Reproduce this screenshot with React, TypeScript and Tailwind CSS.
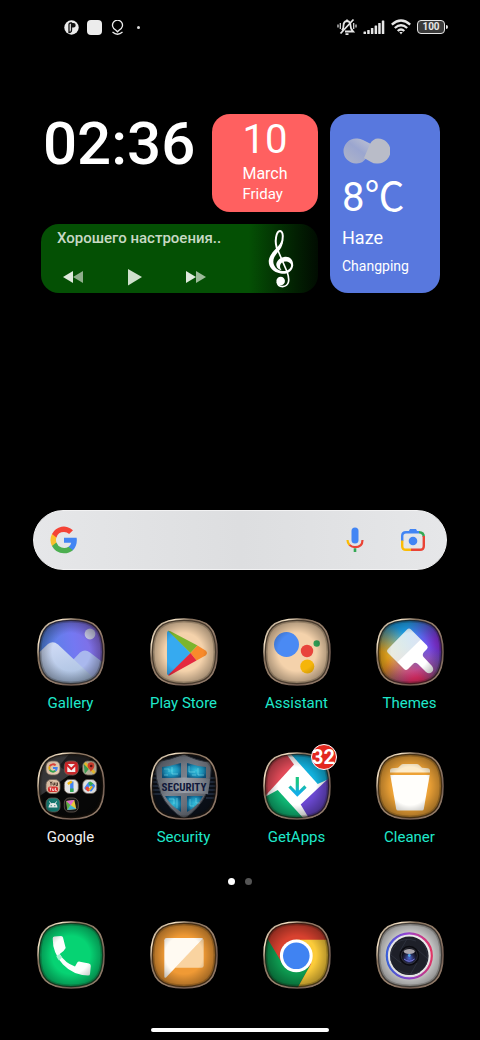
import React from "react";

const SQUIRCLE =
  "M34 1C58 1 67 10 67 34C67 58 58 67 34 67C10 67 1 58 1 34C1 10 10 1 34 1Z";

function Tile({
  id,
  shade = 0.6,
  children,
}: {
  id: string;
  shade?: number;
  children: React.ReactNode;
}) {
  return (
    <svg viewBox="0 0 68 68" className="size-[68px]" aria-hidden="true">
      <defs>
        <clipPath id={`${id}-clip`}>
          <path d={SQUIRCLE} />
        </clipPath>
        <radialGradient id={`${id}-shade`} cx="0.5" cy="0.5" r="0.62">
          <stop offset="0.45" stopColor="#000" stopOpacity="0" />
          <stop offset="0.78" stopColor="#000" stopOpacity={shade * 0.55} />
          <stop offset="1" stopColor="#000" stopOpacity={shade} />
        </radialGradient>
        <linearGradient id={`${id}-rim`} x1="0" y1="0" x2="1" y2="1">
          <stop offset="0" stopColor="#6b5a48" />
          <stop offset="0.18" stopColor="#f6e4c8" />
          <stop offset="0.3" stopColor="#85705c" />
          <stop offset="0.55" stopColor="#9c8470" />
          <stop offset="0.75" stopColor="#6f5a50" />
          <stop offset="1" stopColor="#b09880" />
        </linearGradient>
      </defs>
      <g clipPath={`url(#${id}-clip)`}>
        {children}
        <rect width="68" height="68" fill={`url(#${id}-shade)`} />
        <path d={SQUIRCLE} fill="none" stroke="#1a120c" strokeOpacity="0.2" strokeWidth="7" />
        <path d={SQUIRCLE} fill="none" stroke="#1a120c" strokeOpacity="0.6" strokeWidth="4" />
      </g>
      <path d={SQUIRCLE} fill="none" stroke={`url(#${id}-rim)`} strokeWidth="1.6" />
    </svg>
  );
}

function GalleryIcon() {
  return (
    <Tile id="gallery">
      <defs>
        <linearGradient id="gallery-sky" x1="0" y1="0.5" x2="1" y2="0.3">
          <stop offset="0" stopColor="#4b86e0" />
          <stop offset="0.55" stopColor="#7478f2" />
          <stop offset="1" stopColor="#8a68dc" />
        </linearGradient>
        <linearGradient id="gallery-hill" x1="0" y1="0" x2="0.3" y2="1">
          <stop offset="0" stopColor="#d3def8" />
          <stop offset="1" stopColor="#a9bfdf" />
        </linearGradient>
      </defs>
      <rect width="68" height="68" fill="url(#gallery-sky)" />
      <circle cx="53" cy="16" r="5.4" fill="#c9cbe8" />
      <path d="M34 44L43 34.500Q48 30.500 53 34.500L68 46V68H34Z" fill="#a9b8ee" />
      <path d="M0 36.500L11 26Q16 22.500 21 26.500L62 65V68H0Z" fill="url(#gallery-hill)" />
    </Tile>
  );
}

function PlayStoreIcon() {
  return (
    <Tile id="play">
      <rect width="68" height="68" fill="#f4d2ab" />
      <path d="M17 15Q17 12.500 19 13L40.500 35L19.500 57Q17 57.500 17 55.500Z" fill="#36aaf0" />
      <path d="M18 12.800Q19 12.500 20.500 13.300L47.500 27.500L40.500 35Z" fill="#7cb52e" />
      <path d="M47.500 27.500L55.500 32.500Q58.500 35 55.500 37.500L46.500 42.500L40.500 35Z" fill="#f98a2b" />
      <path d="M40.500 35L46.500 42.500L20 57.200Q18.800 57.700 18 57.200Z" fill="#e5283f" />
    </Tile>
  );
}

function AssistantIcon() {
  return (
    <Tile id="assistant">
      <rect width="68" height="68" fill="#f4d2ab" />
      <circle cx="23.500" cy="26.500" r="12.500" fill="#4a8af4" />
      <circle cx="44" cy="33" r="6.200" fill="#e8443c" />
      <circle cx="53.700" cy="25.500" r="3.200" fill="#2f9e55" />
      <circle cx="44.300" cy="48.500" r="7" fill="#f5b50a" />
    </Tile>
  );
}

function ThemesIcon() {
  return (
    <Tile id="themes">
      <defs>
        <radialGradient id="themes-purple" cx="1" cy="0.35" r="0.6">
          <stop offset="0.2" stopColor="#8b35e8" />
          <stop offset="1" stopColor="#8b35e8" stopOpacity="0" />
        </radialGradient>
        <radialGradient id="themes-pink" cx="0.6" cy="1" r="0.6">
          <stop offset="0.2" stopColor="#f0306c" />
          <stop offset="1" stopColor="#f0306c" stopOpacity="0" />
        </radialGradient>
        <radialGradient id="themes-amber" cx="0" cy="0.65" r="0.6">
          <stop offset="0.3" stopColor="#f2ac1c" />
          <stop offset="1" stopColor="#f2ac1c" stopOpacity="0" />
        </radialGradient>
        <linearGradient id="themes-head" x1="0" y1="0" x2="0.8" y2="0.8">
          <stop offset="0.6" stopColor="#eef4f4" stopOpacity="0.88" />
          <stop offset="0.62" stopColor="#fff" />
        </linearGradient>
      </defs>
      <rect width="68" height="68" fill="#1d9fe8" />
      <rect width="68" height="68" fill="url(#themes-purple)" />
      <rect width="68" height="68" fill="url(#themes-amber)" />
      <rect width="68" height="68" fill="url(#themes-pink)" />
      <path
        d="M12 31L31 11.500Q33 9.700 35 11.500L51 27.500Q52.500 29 51 31L48 34Q45.500 37 48 39.500L56 48Q58.500 51.500 56 54Q53 56.500 50 54L42.500 46.500Q39.500 43.500 37 46L32 51Q30 53 28 51L12 35Q10 33 12 31Z"
        fill="url(#themes-head)"
      />
    </Tile>
  );
}

function MiniTile({ x, y, fill, children }: { x: number; y: number; fill: string; children: React.ReactNode }) {
  return (
    <g transform={`translate(${x} ${y})`}>
      <rect x="-7" y="-7" width="14" height="14" rx="5" fill={fill} stroke="#6d6157" strokeWidth="0.8" />
      {children}
    </g>
  );
}

function GoogleFolderIcon() {
  return (
    <Tile id="google" shade={0.2}>
      <rect width="68" height="68" fill="#070707" />
      <path d="M0 0H34V22L0 46Z" fill="#3a3a3c" />
      <path d="M34 0L60 0L36 24L22 14Z" fill="#1d1d1f" />
      <MiniTile x={16} y={16} fill="#e9cfb4">
        <g fill="none" strokeWidth="2">
          <path d="M2.600 -2.600A3.700 3.700 0 0 0 -3.200 -1.800" stroke="#e8443c" />
          <path d="M-3.200 -1.800A3.700 3.700 0 0 0 -3.200 1.800" stroke="#f5b50a" />
          <path d="M-3.200 1.800A3.700 3.700 0 0 0 2.400 2.800" stroke="#34a853" />
          <path d="M2.400 2.800A3.700 3.700 0 0 0 3.700 0H0" stroke="#4285f4" />
        </g>
      </MiniTile>
      <MiniTile x={34.3} y={16} fill="#c32a2c">
        <rect x="-5" y="-4" width="10" height="8" fill="#f2eeee" />
        <path d="M-5 4V-4L0 1L5 -4V4" fill="none" stroke="#d42126" strokeWidth="2" />
      </MiniTile>
      <MiniTile x={52.7} y={16} fill="#b9b49c">
        <path d="M-6 -5L0 0L-5 6Z" fill="#3e9e54" />
        <path d="M-5 -5L5 5" stroke="#f0c02c" strokeWidth="2.5" />
        <path d="M1 4C1 1 -3 0 -2 -3A3.300 3.300 0 0 1 4.600 -2C4.600 1 1.500 2 1 4Z" fill="#d8402f" />
        <circle cx="1.500" cy="-2" r="1.300" fill="#571713" />
      </MiniTile>
      <MiniTile x={16} y={34.5} fill="#dcc2a8">
        <path d="M-3 -5L-2 -3L-1 -5M-2 -3V-1M0 -4V-1.500H1.500V-4M3 -4V-1H4.500V-4" fill="none" stroke="#4b3329" strokeWidth="0.900" />
        <rect x="-5" y="0" width="10" height="5.500" rx="2" fill="#d7302e" />
        <path d="M-3.500 1.500H-1.500M-2.500 1.500V4.200M-0.500 2V4H1V2M2.500 1.300V4.200H4" fill="none" stroke="#fff" strokeWidth="0.700" />
      </MiniTile>
      <MiniTile x={34.3} y={34.5} fill="#e4e4e4">
        <path d="M0.500 -5V5" stroke="#4285f4" strokeWidth="3.400" />
        <path d="M0.500 -5L-3.500 -2.500" stroke="#f5b50a" strokeWidth="2.600" />
        <path d="M0.500 2V5.500" stroke="#34a853" strokeWidth="3.400" />
      </MiniTile>
      <MiniTile x={52.7} y={34.5} fill="#dfe2e4">
        <g strokeWidth="3.600" strokeLinecap="round">
          <path d="M-3.500 1.500L-0.500 -2.500" stroke="#4285f4" />
          <path d="M0.500 -3L2.500 -1.500" stroke="#34a853" />
          <path d="M3.500 -0.500L1 3" stroke="#4285f4" />
          <path d="M-1.500 3L-2.500 2" stroke="#ea4335" />
          <path d="M0 3L2 0.500" stroke="#f5b50a" strokeWidth="2" />
        </g>
      </MiniTile>
      <MiniTile x={16} y={53} fill="#157a72">
        <path d="M-4.500 2.500A4.500 4.500 0 0 1 4.500 2.500Z" fill="#f1f6f5" />
        <path d="M-3.500 -3.500L-2 -1M3.500 -3.500L2 -1" stroke="#f1f6f5" strokeWidth="1" />
        <circle cx="-1.800" cy="0.700" r="0.600" fill="#157a72" />
        <circle cx="1.800" cy="0.700" r="0.600" fill="#157a72" />
      </MiniTile>
      <MiniTile x={34.3} y={53} fill="#191919">
        <path d="M-5 -4L3 -5L5 4L-4 5Z" fill="#e8c83c" />
        <path d="M-5 -4L3 -5L-1 1Z" fill="#e26ad2" />
        <path d="M-4 5L-1 0L5 4Z" fill="#47b7d8" />
        <path d="M-5 -4L-1 0L-4 5Z" fill="#58b04c" />
      </MiniTile>
    </Tile>
  );
}

function SecurityIcon() {
  return (
    <Tile id="security" shade={0.35}>
      <defs>
        <linearGradient id="security-steel" x1="0" y1="0" x2="1" y2="1">
          <stop offset="0" stopColor="#5a606a" />
          <stop offset="0.45" stopColor="#7b818b" />
          <stop offset="1" stopColor="#4a4f58" />
        </linearGradient>
        <linearGradient id="security-band" x1="0" y1="0" x2="1" y2="0">
          <stop offset="0" stopColor="#666c76" />
          <stop offset="0.5" stopColor="#9a9fa8" />
          <stop offset="1" stopColor="#6e747e" />
        </linearGradient>
        <radialGradient id="security-glass" cx="0.5" cy="0.5" r="0.6">
          <stop offset="0" stopColor="#36c4e0" />
          <stop offset="0.6" stopColor="#1b8fb8" />
          <stop offset="1" stopColor="#0c4f78" />
        </radialGradient>
      </defs>
      <rect width="68" height="68" fill="#0b1019" />
      <path d="M0 22H8M0 26H8M0 30H9M0 34H9M0 38H10M0 42H11M60 26H68M60 30H68M59 34H68M58 38H68M57 42H68M56 46H68" stroke="#28344a" strokeWidth="1.600" />
      <path
        d="M34 2Q46 9 61 10Q62 27 56 42Q50 56 34 67Q18 57 11 42Q5 27 5 10Q21 8 34 2Z"
        fill="url(#security-steel)"
        stroke="#353a42"
      />
      <path d="M12 15Q21 14 31 11V26H12Z" fill="url(#security-glass)" />
      <path d="M37 11Q46 14 56 15V26H37Z" fill="url(#security-glass)" />
      <path d="M15 44H31V60Q20 53 15 44Z" fill="url(#security-glass)" />
      <path d="M37 44H53Q48 54 37 60Z" fill="url(#security-glass)" />
      <path
        d="M14 17H19V20M22 15V22H28M14 23H18M39 14V20H45M48 16V23H54M42 23H46M19 47H24V52M27 46V56M40 47V54H44M46 46V51H50"
        fill="none"
        stroke="#82e4ef"
        strokeOpacity="0.600"
        strokeWidth="0.900"
      />
      <path d="M8 27Q34 24 60 27L58 42Q34 40 12 42Z" fill="url(#security-band)" />
      <text
        x="34"
        y="39"
        textAnchor="middle"
        className="fill-[#10183a] font-['Liberation_Sans_Narrow','Roboto_Condensed',Roboto,sans-serif] text-[11px] font-bold"
      >
        SECURITY
      </text>
    </Tile>
  );
}

function GetAppsIcon() {
  return (
    <Tile id="getapps">
      <defs>
        <linearGradient id="getapps-arrow" gradientUnits="userSpaceOnUse" x1="34" y1="25" x2="34" y2="44">
          <stop offset="0.3" stopColor="#19c584" />
          <stop offset="0.8" stopColor="#12aee6" />
        </linearGradient>
      </defs>
      <rect width="68" height="68" fill="#fff" />
      <path d="M0 0H22L31 12.500L4 42L0 46Z" fill="#e14a58" />
      <path d="M26 0H68V26L54.700 32Z" fill="#12b0dc" />
      <path d="M0 46L14.700 38L42 68H0Z" fill="#0fb573" />
      <path d="M68 24V68H47L37.700 52.500Z" fill="#6a48d0" />
      <path d="M34.300 25V43M26.500 34.500L34.300 42.500L42.500 34.500" fill="none" stroke="url(#getapps-arrow)" strokeWidth="3.200" />
    </Tile>
  );
}

function CleanerIcon() {
  return (
    <Tile id="cleaner">
      <rect width="68" height="68" fill="#eda236" />
      <path d="M14 20.500V18.500Q14 16.500 16 16.300L22 15.800L25.500 12.500Q26 12 27 12H41Q42 12 42.500 12.500L46 15.800L52 16.300Q54 16.500 54 18.500V20.500Z" fill="#fdeccb" />
      <path d="M14.300 23H53.700L47.800 57Q47.500 58.500 46 58.500H22Q20.500 58.500 20.200 57Z" fill="#fffefb" />
    </Tile>
  );
}

function PhoneIcon() {
  return (
    <Tile id="phone">
      <rect width="68" height="68" fill="#06d373" />
      <path
        d="M17.500 15.500L24 15Q25.700 15 26 16.500L28.700 27Q27 30.500 22.700 33Q28 42 38 45.500L40 42Q41 40.300 43 40.700L52 42.500Q54 43 53.800 45L53 53Q53 54.500 51 54.500Q36 54 26 43.500Q15.500 32 15.700 17.500Q15.700 15.700 17.500 15.500Z"
        fill="#fbfffd"
      />
      <path d="M19.300 35L22.700 33Q23.500 34.500 25 36.500L22 39.500Q20 37 19.300 35Z" fill="#a5f3d2" />
    </Tile>
  );
}

function MessagesIcon() {
  return (
    <Tile id="messages">
      <rect width="68" height="68" fill="#f09a35" />
      <path d="M53.700 19V44.500Q53.700 46.800 51.500 46.800H25L52.800 17.500Z" fill="#f9d3a0" />
      <path d="M16.500 17H51.500Q52.500 17 53 17.500L16 56.500Q14.300 57.500 14.300 55.500V19.200Q14.300 17 16.500 17Z" fill="#fffaf2" />
    </Tile>
  );
}

function ChromeIcon() {
  return (
    <Tile id="chrome">
      <rect width="68" height="68" fill="#d8412f" />
      <path d="M0 10L5 18.500L19 42L34 50L47 45L34 68H0Z" fill="#0d9a50" />
      <path d="M33.300 18.800H68V68H34L48 43Z" fill="#fbcb3a" />
      <circle cx="33.300" cy="34.800" r="16.400" fill="#fff" />
      <circle cx="33.300" cy="34.800" r="13.300" fill="#4083f2" />
    </Tile>
  );
}

function CameraIcon() {
  return (
    <Tile id="camera">
      <defs>
        <linearGradient id="camera-ring" x1="0" y1="0.6" x2="1" y2="0.5">
          <stop offset="0" stopColor="#3f6bf0" />
          <stop offset="0.5" stopColor="#a048e0" />
          <stop offset="1" stopColor="#f0386c" />
        </linearGradient>
        <radialGradient id="camera-lens" cx="0.5" cy="0.65" r="0.5">
          <stop offset="0" stopColor="#4e6ad8" />
          <stop offset="0.6" stopColor="#23264a" />
          <stop offset="1" stopColor="#0c0c12" />
        </radialGradient>
      </defs>
      <rect width="68" height="68" fill="#d9d9d9" />
      <circle cx="33.300" cy="34.800" r="22.500" fill="#ededed" stroke="url(#camera-ring)" strokeWidth="2.200" />
      <circle cx="33.300" cy="34.800" r="19.300" fill="#1e2029" />
      <path
        d="M20 22Q30 16 40 20M47 22Q54 32 50 44M44 51Q34 56 22 49M15 40Q13 30 20 24M24 30L31 18M42 29L52 38M41 42L34 54M25 42L15 34"
        fill="none"
        stroke="#343845"
        strokeWidth="0.700"
      />
      <circle cx="33.300" cy="34.800" r="10" fill="#0b0b10" />
      <circle cx="33.300" cy="34.800" r="8" fill="url(#camera-lens)" stroke="#3d3f4a" strokeWidth="0.700" />
      <ellipse cx="33.300" cy="30.500" rx="5.500" ry="2.600" fill="#c4c0c4" fillOpacity="0.850" />
      <path d="M28 38Q33.300 42.500 38.600 38" fill="none" stroke="#7d7ae6" />
      <circle cx="33.300" cy="34.500" r="1.400" fill="#4fa6e8" />
    </Tile>
  );
}

const apps = [
  { name: "Gallery", icon: <GalleryIcon /> },
  { name: "Play Store", icon: <PlayStoreIcon /> },
  { name: "Assistant", icon: <AssistantIcon /> },
  { name: "Themes", icon: <ThemesIcon /> },
  { name: "Google", icon: <GoogleFolderIcon />, folder: true },
  { name: "Security", icon: <SecurityIcon /> },
  { name: "GetApps", icon: <GetAppsIcon />, badge: 32 },
  { name: "Cleaner", icon: <CleanerIcon /> },
];

const dock = [
  { name: "Phone", icon: <PhoneIcon /> },
  { name: "Messages", icon: <MessagesIcon /> },
  { name: "Chrome", icon: <ChromeIcon /> },
  { name: "Camera", icon: <CameraIcon /> },
];

function StatusBar() {
  return (
    <header className="flex items-center justify-between pt-[15px] pr-8 pl-16">
      <div className="flex h-6 items-center gap-2">
        <svg viewBox="0 0 15 15" className="size-[15px]">
          <circle cx="7.500" cy="7.500" r="7.200" fill="#ececec" />
          <path d="M5 12.500V4.500Q5 3 6.500 3H7.500V10Q7.500 12.500 5 12.500Z" fill="#ececec" stroke="#111" strokeWidth="1.300" />
          <path d="M7.500 3H9.500A2.200 2.200 0 0 1 9.500 7.400H7.500" fill="#111" />
        </svg>
        <span className="size-[15px] rounded-sm bg-[#ececec]" />
        <svg viewBox="0 0 15 15" className="size-[15px]" fill="none" stroke="#ececec" strokeWidth="1.300">
          <path d="M5.500 9.800A5 5 0 1 1 9.500 9.800L7.500 11.800Z" />
          <path d="M2.500 12Q7.500 16.500 12.500 12" />
        </svg>
        <span className="ml-1 size-[3px] rounded-full bg-[#dcdcdc]" />
      </div>
      <div className="flex h-6 items-center gap-1.5">
        <svg viewBox="0 0 20 18" className="h-[18px] w-5" fill="none" stroke="#e6e6e6" strokeWidth="1.800">
          <path d="M5 12.500Q6.500 11 6.500 7.500Q6.500 3.500 10 3Q13.500 3.500 13.500 7.500Q13.500 11 16 13.500H8" />
          <path d="M8.500 16.200H11.500M10 3V1.500M16.500 1.500L3.500 15.500" />
          <path d="M3.300 5V11M1 6.500V9.500M16.700 5V11M19 6.500V9.500" strokeWidth="1.200" />
        </svg>
        <svg viewBox="0 0 22 15" className="h-[15px] w-[22px]" fill="#e6e6e6">
          <rect x="0.500" y="11.500" width="2.500" height="2.500" rx="0.500" />
          <rect x="4.200" y="10" width="2.500" height="4" rx="0.500" />
          <rect x="7.900" y="8" width="2.500" height="6" rx="0.500" />
          <rect x="11.600" y="5.500" width="2.500" height="8.500" rx="0.500" />
          <rect x="15.200" y="3" width="2.500" height="11" rx="0.500" />
          <rect x="18.800" y="0.500" width="2.500" height="13.500" rx="0.500" />
        </svg>
        <svg viewBox="0 0 20 16" className="h-4 w-5" fill="none" stroke="#e6e6e6" strokeWidth="2.300">
          <path d="M0.800 5.600Q10 -2.500 19.200 5.600" />
          <path d="M3.800 9Q10 3.500 16.200 9" />
          <path d="M6.700 12Q10 9 13.300 12" />
          <path d="M8.300 13L10 15.500L11.700 13Z" fill="#e6e6e6" stroke="none" />
        </svg>
        <div className="flex items-center gap-px">
          <span className="flex h-[14px] w-7 items-center justify-center rounded-[4px] border border-[#e6e6e6] bg-[#3a3a3a] text-[10px] leading-none font-bold text-[#e6e6e6]">
            100
          </span>
          <span className="h-1 w-0.5 rounded-r bg-[#e6e6e6]" />
        </div>
      </div>
    </header>
  );
}

function TrebleClef() {
  return (
    <svg viewBox="0 0 78 176" className="h-[58px] w-[26px]" fill="#fff">
      <path d="M30 64C16 34 26 3 36 3C46 4 48 28 38 46" fill="none" stroke="#fff" strokeWidth="6" />
      <path d="M45 32C45 56 28 66 19 82C11 98 18 116 36 123C52 128 68 122 70 106L76 106C75 126 56 136 38 132C14 128 0 112 2 92C6 68 26 58 36 42Z" />
      <path d="M76 108C77 88 62 78 48 82C32 85 23 98 25 108C27 117 34 121 41 122C33 112 35 99 48 96C60 94 70 100 70 108Z" />
      <path d="M28 58L58 128C66 152 64 170 44 172C34 172 28 166 28 158" fill="none" stroke="#fff" strokeWidth="5" />
      <circle cx="38" cy="155" r="13" />
    </svg>
  );
}

function MusicWidget() {
  return (
    <section className="flex h-[69px] items-center justify-between rounded-[18px] bg-linear-to-r from-[#045004] from-75% to-[#010c01] pr-6 pl-4">
      <div className="flex h-full flex-col">
        <p className="mt-1 text-[15px] leading-5 font-medium text-[#c8d9c4]">Хорошего настроения..</p>
        <div className="mt-4 flex items-center gap-9 pl-1">
          <button aria-label="Previous" className="h-[26px] w-[26px]">
            <svg viewBox="0 0 26 26" className="size-full">
              <path d="M2 13L12 7V19Z" fill="#dfe9dd" />
              <path d="M12 13L22 7V19Z" fill="#8fae8c" />
            </svg>
          </button>
          <button aria-label="Play" className="h-[26px] w-[26px]">
            <svg viewBox="0 0 26 26" className="size-full">
              <path d="M5 5L19 13L5 21.500Z" fill="#cfe0cc" />
            </svg>
          </button>
          <button aria-label="Next" className="h-[26px] w-[26px]">
            <svg viewBox="0 0 26 26" className="size-full">
              <path d="M1 7L11 13L1 19Z" fill="#dfe9dd" />
              <path d="M11 7L21 13L11 19Z" fill="#9dba9a" />
            </svg>
          </button>
        </div>
      </div>
      <TrebleClef />
    </section>
  );
}

function WeatherWidget() {
  return (
    <section className="flex w-[110px] flex-col rounded-[18px] bg-[#5878de] pt-6 pl-3">
      <svg viewBox="0 0 48 26" className="h-[26px] w-12">
        <defs>
          <linearGradient id="haze-left" x1="0" y1="1" x2="1" y2="0">
            <stop offset="0" stopColor="#b0b5c8" />
            <stop offset="0.500" stopColor="#9ba6cf" />
            <stop offset="1" stopColor="#c8cad3" />
          </linearGradient>
        </defs>
        <path d="M14 0.500Q18 0 21 2L35 9L26 18Q21 26 14 25.500A12.500 12.500 0 0 1 14 0.500Z" fill="url(#haze-left)" />
        <path d="M36 0.500A12.500 12.500 0 0 1 36 25.500Q32 26 29 24L22 20L28 6Q31 0.500 36 0.500Z" fill="#b9bcc8" />
      </svg>
      <p className="mt-2.5 text-[40px] leading-12">8℃</p>
      <p className="mt-1 text-lg leading-6">Haze</p>
      <p className="mt-1.5 text-sm leading-5">Changping</p>
    </section>
  );
}

function SearchBar() {
  return (
    <form
      role="search"
      className="mx-[33px] flex h-[60px] items-center rounded-full border border-[#f2f2f3] bg-linear-to-r from-[#e6e7e9] via-[#dddee0] to-[#e6e7e9] pr-5 pl-4"
    >
      <svg viewBox="0 0 24 24" className="size-[28px]">
        <path fill="#4285f4" d="M23 12.250c0-.8-.07-1.500-.2-2.250H12v4.300h6.200a5.300 5.300 0 0 1-2.300 3.500v2.900h3.700c2.200-2 3.400-5 3.400-8.450z" />
        <path fill="#4caf50" d="M12 23.400c3.100 0 5.700-1 7.600-2.700l-3.700-2.900a7 7 0 0 1-10.400-3.600H1.700v3A11.400 11.400 0 0 0 12 23.400z" />
        <path fill="#fbc02d" d="M5.500 14.200a6.800 6.800 0 0 1 0-4.400v-3H1.700a11.400 11.400 0 0 0 0 10.300z" />
        <path fill="#f44336" d="M12 5.200c1.700 0 3.200.6 4.400 1.700l3.300-3.300A11.400 11.400 0 0 0 1.700 6.900l3.800 3A6.800 6.800 0 0 1 12 5.200z" />
      </svg>
      <input type="search" aria-label="Search" className="min-w-0 flex-1 bg-transparent px-3 text-base text-gray-800 outline-none" />
      <button type="button" aria-label="Voice search" className="mr-8">
        <svg viewBox="0 0 26 26" className="size-[26px]" fill="none">
          <rect x="9.500" y="0.500" width="7" height="16" rx="3.500" fill="#4285f4" />
          <path d="M5.500 13Q5.500 15.800 7.500 18" stroke="#fbbc04" strokeWidth="2.200" />
          <path d="M7.500 18Q10 20.200 13 20.200Q20.500 20 20.500 13" stroke="#ea4335" strokeWidth="2.200" />
          <path d="M13 21.300V25" stroke="#34a853" strokeWidth="2.600" />
        </svg>
      </button>
      <button type="button" aria-label="Search with camera">
        <svg viewBox="0 0 26 26" className="size-[26px]" fill="none" strokeWidth="2.400">
          <path d="M2.200 14V9Q2.200 5.200 6 5.200H19" stroke="#4285f4" />
          <path d="M8 5.500L10 2H16L18 5.500Z" fill="#4285f4" />
          <path d="M19 5.200Q23.800 5.200 23.800 10" stroke="#34a853" />
          <path d="M23.800 9V19Q23.800 22.800 20 22.800H11" stroke="#ea4335" />
          <path d="M11 22.800H6Q2.200 22.800 2.200 19V13.500" stroke="#fbbc04" />
          <circle cx="13" cy="14" r="4.300" fill="#4285f4" />
        </svg>
      </button>
    </form>
  );
}

export default function App() {
  return (
    <div className="flex min-h-screen flex-col bg-black font-[Roboto,'Noto_Sans_CJK_SC',sans-serif] text-white">
      <StatusBar />

      <div className="mr-10 ml-[41px] mt-[75px] flex gap-3">
        <div className="flex flex-1 flex-col gap-3">
          <div className="flex justify-between">
            <time className="pl-0.5 text-[60px] leading-[60px] font-medium">02:36</time>
            <section className="flex h-[98px] w-[106px] flex-col items-center rounded-[18px] bg-[#ff6060] pt-0.5">
              <div>
                <p className="text-[40px] leading-12">10</p>
                <p className="text-base leading-5">March</p>
                <p className="text-[15px] leading-5">Friday</p>
              </div>
            </section>
          </div>
          <MusicWidget />
        </div>
        <WeatherWidget />
      </div>

      <div className="mt-auto pt-8">
        <SearchBar />
      </div>

      <main className="mt-12 grid grid-cols-4 gap-y-10 px-[14px]">
        {apps.map((app) => (
          <button key={app.name} className="flex flex-col items-center gap-2">
            <span className="relative">
              {app.icon}
              {app.badge && (
                <span className="absolute -top-2 -right-1.5 flex size-[26px] items-center justify-center rounded-full border border-white bg-[#e3281f] text-xl leading-none font-bold">
                  {app.badge}
                </span>
              )}
            </span>
            <span className={`text-[15px] leading-[18px] ${app.folder ? "text-[#f2f2f2]" : "text-[#1fe8cb]"}`}>
              {app.name}
            </span>
          </button>
        ))}
      </main>

      <div className="mt-8 flex justify-center gap-2.5">
        <span className="size-[7px] rounded-full bg-white" />
        <span className="size-[7px] rounded-full bg-[#555]" />
      </div>

      <nav className="mt-9 grid grid-cols-4 px-[14px]">
        {dock.map((app) => (
          <button key={app.name} aria-label={app.name} className="flex justify-center">
            {app.icon}
          </button>
        ))}
      </nav>

      <div className="mx-auto mt-[39px] mb-2 h-1 w-[37%] rounded-full bg-white" />
    </div>
  );
}
